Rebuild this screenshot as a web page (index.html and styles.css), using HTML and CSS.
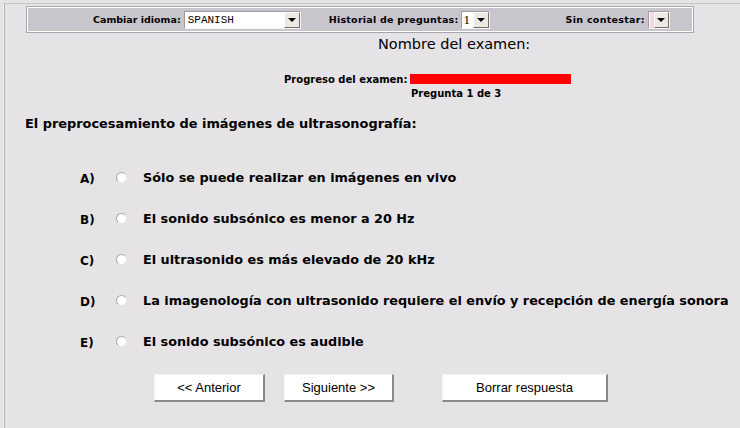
FILE: index.html
```html
<!DOCTYPE html>
<html lang="es">
<head>
<meta charset="utf-8">
<title>Examen</title>
<link rel="stylesheet" href="styles.css">
</head>
<body>
<div class="frame">
  <div class="toolbar">
    <span class="tlabel">Cambiar idioma:</span>
    <div class="sel sel-lang"><span class="sel-text mono">SPANISH</span><span class="sel-btn"><i class="arrow"></i></span></div>
    <span class="tlabel tl2">Historial de preguntas:</span>
    <div class="sel sel-hist"><span class="sel-text serif">1</span><span class="sel-btn"><i class="arrow"></i></span></div>
    <span class="tlabel tl3">Sin contestar:</span>
    <div class="sel sel-sin"><span class="sel-text pink"></span><span class="sel-btn"><i class="arrow"></i></span></div>
  </div>

  <div class="title">Nombre del examen:</div>

  <div class="progress">
    <span class="plabel">Progreso del examen:</span>
    <span class="bar"></span>
  </div>
  <div class="qnum">Pregunta 1 de 3</div>

  <div class="question">El preprocesamiento de imágenes de ultrasonografía:</div>

  <ul class="answers">
    <li class="ans"><span class="letter">A)</span><span class="radio"></span><span class="atext">Sólo se puede realizar en imágenes en vivo</span></li>
    <li class="ans"><span class="letter">B)</span><span class="radio"></span><span class="atext">El sonido subsónico es menor a 20 Hz</span></li>
    <li class="ans"><span class="letter">C)</span><span class="radio"></span><span class="atext">El ultrasonido es más elevado de 20 kHz</span></li>
    <li class="ans"><span class="letter">D)</span><span class="radio"></span><span class="atext">La imagenología con ultrasonido requiere el envío y recepción de energía sonora</span></li>
    <li class="ans"><span class="letter">E)</span><span class="radio"></span><span class="atext">El sonido subsónico es audible</span></li>
  </ul>

  <div class="buttons">
    <button class="btn btn-prev">&lt;&lt; Anterior</button>
    <button class="btn btn-next">Siguiente &gt;&gt;</button>
    <button class="btn btn-clear">Borrar respuesta</button>
  </div>
</div>
</body>
</html>
```
FILE: styles.css
```css
html, body {
  margin: 0;
  padding: 0;
  background: #e5e3e5;
  width: 740px;
  height: 428px;
  overflow: hidden;
  font-family: "DejaVu Sans", Verdana, sans-serif;
  color: #000;
}

.frame {
  margin: 3px 0 0 4px;
  border-left: 1px solid #b4b2b4;
  border-top: 1px solid #c8c6c8;
  height: 430px;
  box-shadow: -3px 0 0 -2px #f4f2f4;
  width: 760px;
}

.toolbar {
  margin: 3px 0 0 22px;
  width: 664px;
  height: 23px;
  background: #c8c5cc;
  border: 1px solid #ffffff;
  outline: 1px solid #a8a6aa;
  display: flex;
  align-items: center;
}

.tlabel {
  font-weight: bold;
  font-size: 9.5px;
  white-space: nowrap;
}
.tlabel:first-child { margin-left: 65px; }
.tl2 { margin-left: 28px; letter-spacing: 0.25px; }
.tl3 { margin-left: 76px; letter-spacing: 0.3px; }

.sel {
  display: flex;
  height: 18px;
  box-sizing: border-box;
  background: #fff;
  border-top: 1px solid #9e9c9e;
  border-left: 1px solid #9e9c9e;
  border-right: 1px solid #f4f2f4;
  border-bottom: 1px solid #f4f2f4;
  margin-left: 3px;
}
.sel-lang { width: 117px; }
.sel-hist { width: 29px; margin-left: 2px; }
.sel-sin { width: 22px; margin-left: 3px; }

.sel-text {
  flex: 1;
  font-size: 11px;
  line-height: 16px;
  padding-left: 3px;
  overflow: hidden;
}
.mono { font-family: "Liberation Mono", monospace; font-size: 11px; }
.serif { font-family: "Liberation Serif", serif; font-size: 13px; padding-left: 2px; }
.pink { background: #f3d9de; flex: 0 0 4px; padding: 0; margin-left: 1px; }

.sel-btn {
  width: 16px;
  height: 16px;
  box-sizing: border-box;
  background: #ece9e3;
  border-top: 1px solid #ffffff;
  border-left: 1px solid #ffffff;
  border-right: 1px solid #716f64;
  border-bottom: 1px solid #716f64;
  display: flex;
  align-items: center;
  justify-content: center;
  margin-left: auto;
}
.arrow {
  display: block;
  width: 0;
  height: 0;
  border-left: 4px solid transparent;
  border-right: 4px solid transparent;
  border-top: 4px solid #000;
}

.title {
  margin: 4px 0 0 373px;
  font-size: 14.5px;
  line-height: 17px;
}

.progress {
  display: flex;
  align-items: center;
  margin: 20px 0 0 279px;
  height: 12px;
}
.plabel {
  font-weight: bold;
  font-size: 10px;
}
.bar {
  display: block;
  width: 161px;
  height: 10px;
  background: #ff0000;
  margin-left: 3px;
}

.qnum {
  margin: 3px 0 0 406px;
  font-weight: bold;
  font-size: 10px;
  line-height: 12px;
}

.question {
  margin: 16px 0 0 20px;
  font-size: 12.9px;
  font-weight: bold;
  line-height: 16px;
}

.answers {
  list-style: none;
  margin: 37px 0 0 0;
  padding: 0;
}
.ans {
  display: flex;
  align-items: center;
  height: 16px;
  margin-bottom: 25px;
  white-space: nowrap;
}
.letter {
  width: 34px;
  margin-left: 75px;
  font-size: 12px;
  font-weight: bold;
  position: relative;
  top: 2px;
}
.radio {
  width: 11px;
  height: 11px;
  border-radius: 50%;
  box-sizing: border-box;
  background: #ffffff;
  border-top: 1px solid #a9a7a9;
  border-left: 1px solid #a9a7a9;
  border-right: 1px solid #e8e6e8;
  border-bottom: 1px solid #e8e6e8;
  margin-left: 2px;
}
.atext {
  margin-left: 16px;
  font-size: 12.8px;
  font-weight: bold;
}

.buttons {
  display: flex;
  margin: 11px 0 0 149px;
}
.btn {
  height: 28px;
  box-sizing: border-box;
  background: #ffffff;
  border-top: 1px solid #f6f4f6;
  border-left: 1px solid #f6f4f6;
  border-right: 2px solid #8a888a;
  border-bottom: 2px solid #8a888a;
  font-family: "Liberation Sans", Arial, sans-serif;
  font-size: 13px;
  padding: 0;
  color: #000;
}
.btn-prev { width: 111px; }
.btn-next { width: 110px; margin-left: 19px; }
.btn-clear { width: 166px; margin-left: 48px; }
```
